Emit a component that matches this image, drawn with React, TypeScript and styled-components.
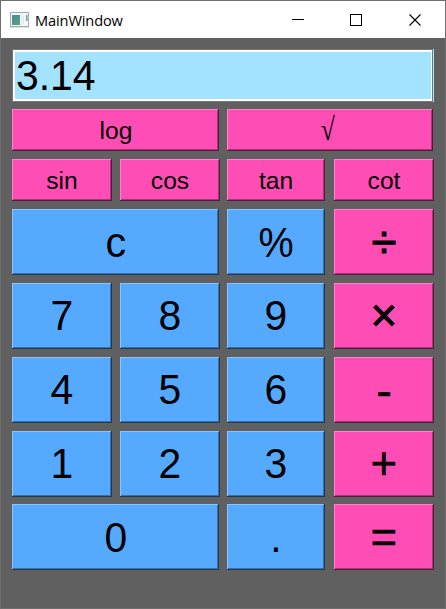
import React from "react";
import styled, { createGlobalStyle } from "styled-components";

const GlobalStyle = createGlobalStyle`
  * { box-sizing: border-box; }
  body { margin: 0; background: #606060; }
`;

const Window = styled.main`
  width: 446px;
  height: 609px;
  background: #606060;
  border: 1px solid #6e6e6e;
  font-family: "Liberation Sans", Arial, sans-serif;
  color: #000;
  overflow: hidden;
`;

const TitleBar = styled.header`
  display: flex;
  align-items: center;
  height: 37px;
  padding-left: 9px;
  background: #fff;
`;

const Title = styled.h1`
  flex: 1;
  margin: 0 0 0 6px;
  font: 400 14.6px/20px "Open Sans", sans-serif;
  letter-spacing: -0.12px;
`;

const Controls = styled.div`
  display: flex;
  padding-right: 1px;
`;

const ControlButton = styled.button`
  display: flex;
  align-items: center;
  justify-content: center;
  width: 58px;
  height: 37px;
  padding: 0 2px 0 0;
  border: 0;
  background: transparent;

  &:last-child {
    padding-right: 0;
  }
`;

const Body = styled.section`
  padding: 11px 0 0 11px;
`;

const DisplayFrame = styled.div`
  width: 422px;
  border-right: 1px solid #a3e3ff;
`;

const Display = styled.output`
  display: block;
  height: 53px;
  padding: 1px 0 0 3px;
  border: 1px solid #767676;
  background: #a3e3ff;
  box-shadow: inset 2px 2px #fff, inset -1px -2px #fff;
  font-size: 43px;
  line-height: 48px;
`;

const Label = styled.span<{ $scale: number }>`
  display: inline-block;
  transform: scaleX(${(p) => p.$scale});
`;

const DisplayValue = styled(Label)`
  transform-origin: left center;
`;

const Radical = styled.span`
  display: block;
  margin-right: 6px;
  padding-bottom: 5px;
  font-family: "Liberation Serif", serif;
  font-size: 32px;
  line-height: 32px;
  transform: scaleX(0.8);
`;

const Keys = styled.div`
  display: grid;
  grid-template-columns: 108px 107px 107px 100px;
  grid-template-rows: 50px 50px 74px 74px 74px 73px 66px;
  margin-top: 7px;
`;

type Tone = "pink" | "blue";

const tones = {
  pink: { fill: "#ff4db6", light: "#ff82cb", mid: "#aa337a", dark: "#551a3d" },
  blue: { fill: "#55aaff", light: "#88c4ff", mid: "#3971aa", dark: "#1c3955" },
};

const Key = styled.button<{
  $tone: Tone;
  $w: number;
  $h: number;
  $span: number;
  $size: number;
  $stroke: number;
  $drop: number;
}>`
  display: flex;
  align-items: center;
  justify-content: center;
  grid-column: span ${(p) => p.$span};
  width: ${(p) => p.$w}px;
  height: ${(p) => p.$h}px;
  padding: ${(p) => Math.max(0, p.$drop)}px 0 ${(p) => Math.max(0, -p.$drop)}px
    ${(p) => (p.$span > 1 ? 1 : 0)}px;
  border: 0;
  background: ${(p) => tones[p.$tone].fill};
  box-shadow:
    inset -1px -1px ${(p) => tones[p.$tone].dark},
    inset 1px 1px ${(p) => tones[p.$tone].light},
    inset -2px -2px ${(p) => tones[p.$tone].mid};
  color: #000;
  font-family: "Liberation Sans", Arial, sans-serif;
  font-size: ${(p) => p.$size}px;
  font-weight: 400;
  line-height: 1;
  -webkit-text-stroke: ${(p) => p.$stroke}px #000;
`;

interface KeySpec {
  label: string;
  tone?: Tone;
  w?: number;
  h?: number;
  span?: number;
  size?: number;
  stroke?: number;
  drop?: number;
  scale?: number;
}

const fn = { tone: "pink" as Tone, h: 42, size: 24.6, drop: 2, scale: 1 };
const op = { tone: "pink" as Tone, size: 47, stroke: 0.5, scale: 0.97, drop: 0 };

const keys: KeySpec[] = [
  { ...fn, label: "log", w: 207, span: 2 },
  { ...fn, label: "√", w: 206, span: 2 },
  { ...fn, label: "sin" },
  { ...fn, label: "cos" },
  { ...fn, label: "tan", w: 98 },
  { ...fn, label: "cot" },
  { label: "c", w: 207, span: 2, drop: 0, scale: 0.96 },
  { label: "%", w: 98, drop: 0, scale: 0.92 },
  { ...op, label: "÷", drop: -1, stroke: 0.9 },
  { label: "7" },
  { label: "8" },
  { label: "9", w: 98 },
  { ...op, label: "×", drop: -3, stroke: 1 },
  { label: "4" },
  { label: "5" },
  { label: "6", w: 98 },
  { ...op, label: "-", drop: 0, scale: 1 },
  { label: "1" },
  { label: "2" },
  { label: "3", w: 98 },
  { ...op, label: "+", drop: -3 },
  { label: "0", w: 207, span: 2, drop: 0 },
  { label: ".", w: 98, drop: 0 },
  { ...op, label: "=", drop: -1 },
];

const AppIcon = () => (
  <svg width="19" height="16" viewBox="0 0 19 16" aria-hidden="true">
    <defs>
      <linearGradient id="pane" x1="0" y1="0" x2="1" y2="1">
        <stop offset="0" stopColor="#4a86a4" />
        <stop offset="1" stopColor="#56a878" />
      </linearGradient>
    </defs>
    <rect x="0.5" y="0.5" width="18" height="14" fill="#f5f6f8" stroke="#a4a9ae" />
    <path d="M0 15.5H19" stroke="#dfe1e3" />
    <rect x="2" y="3" width="8" height="10" fill="url(#pane)" />
    <path d="M11.5 3V13M13.5 4V12" stroke="#e5e8eb" />
    <rect x="16" y="3" width="1.5" height="6" fill="#62a99b" />
  </svg>
);

export default function App() {
  return (
    <>
      <GlobalStyle />
      <Window>
        <TitleBar>
          <AppIcon />
          <Title>MainWindow</Title>
          <Controls>
            <ControlButton aria-label="Minimize">
              <svg width="12" height="12" shapeRendering="crispEdges">
                <path d="M0 5.5H12" stroke="#000" />
              </svg>
            </ControlButton>
            <ControlButton aria-label="Maximize">
              <svg width="12" height="12" shapeRendering="crispEdges">
                <rect x="0.5" y="0.5" width="11" height="11" fill="none" stroke="#000" />
              </svg>
            </ControlButton>
            <ControlButton aria-label="Close">
              <svg width="12" height="12">
                <path d="M0.5 0.5L11.5 11.5M11.5 0.5L0.5 11.5" stroke="#000" strokeWidth="1.1" />
              </svg>
            </ControlButton>
          </Controls>
        </TitleBar>
        <Body>
          <DisplayFrame>
            <Display>
              <DisplayValue $scale={0.95}>3.14</DisplayValue>
            </Display>
          </DisplayFrame>
          <Keys>
            {keys.map((k) => (
              <Key
                key={k.label}
                $tone={k.tone ?? "blue"}
                $w={k.w ?? 100}
                $h={k.h ?? 66}
                $span={k.span ?? 1}
                $size={k.size ?? 43}
                $stroke={k.stroke ?? 0}
                $drop={k.drop ?? -2}
              >
                {k.label === "√" ? (
                  <Radical>{k.label}</Radical>
                ) : (
                  <Label $scale={k.scale ?? 0.95}>{k.label}</Label>
                )}
              </Key>
            ))}
          </Keys>
        </Body>
      </Window>
    </>
  );
}
